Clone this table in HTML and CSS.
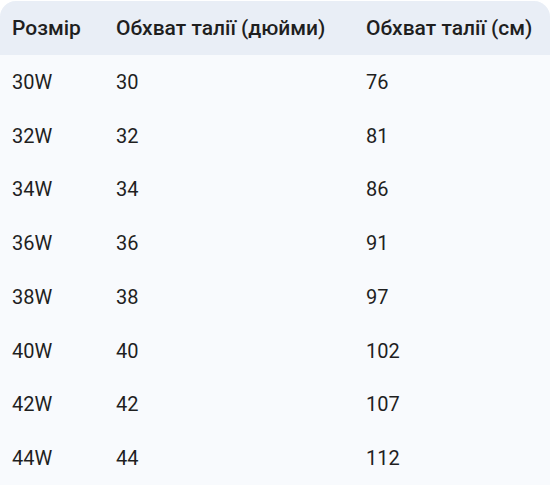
FILE: index.html
```html
<!DOCTYPE html>
<html lang="uk">
<head>
<meta charset="utf-8">
<link rel="stylesheet" href="styles.css">
</head>
<body>
<div class="wrap">
<table class="sizes">
  <colgroup><col class="c1"><col class="c2"><col class="c3"></colgroup>
  <thead>
    <tr><th>Розмір</th><th>Обхват талії (дюйми)</th><th>Обхват талії (см)</th></tr>
  </thead>
  <tbody>
    <tr><td>30W</td><td>30</td><td>76</td></tr>
    <tr><td>32W</td><td>32</td><td>81</td></tr>
    <tr><td>34W</td><td>34</td><td>86</td></tr>
    <tr><td>36W</td><td>36</td><td>91</td></tr>
    <tr><td>38W</td><td>38</td><td>97</td></tr>
    <tr><td>40W</td><td>40</td><td>102</td></tr>
    <tr><td>42W</td><td>42</td><td>107</td></tr>
    <tr><td>44W</td><td>44</td><td>112</td></tr>
  </tbody>
</table>
</div>
</body>
</html>
```

FILE: styles.css
```css
html, body {
  margin: 0;
  padding: 0;
  background: #ffffff;
}
.wrap {
  padding-top: 1px;
}
.sizes {
  width: 550px;
  border-collapse: separate;
  border-spacing: 0;
  table-layout: fixed;
  font-family: Roboto, "Noto Sans", sans-serif;
  font-size: 20px;
  color: #1f1f1f;
  background: #f8fafd;
  border-radius: 16px 16px 0 0;
  overflow: hidden;
}
.c1 { width: 104px; }
.c2 { width: 250px; }
.c3 { width: 196px; }
.sizes th {
  background: #e9eef6;
  font-size: 21px;
  font-weight: 500;
  text-align: left;
  height: 54px;
  padding: 0 0 0 12px;
  box-sizing: border-box;
  white-space: nowrap;
}
.sizes td {
  height: 53.75px;
  padding: 0 0 0 12px;
  box-sizing: border-box;
  font-weight: 400;
}
```
